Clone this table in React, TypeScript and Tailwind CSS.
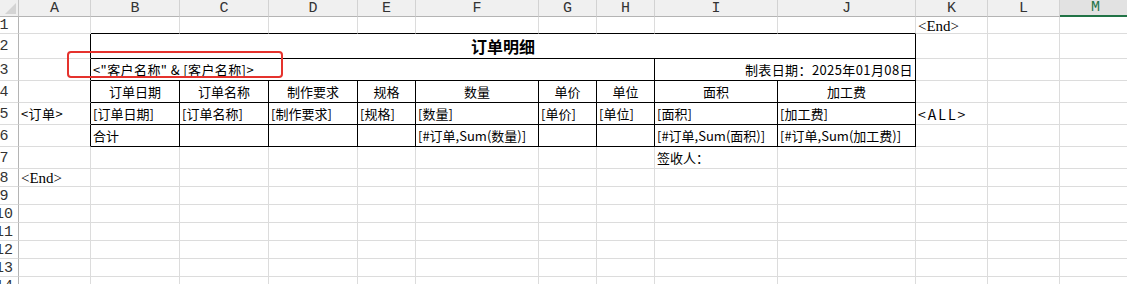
import React from "react";

type Cell = {
  text?: string;
  span?: number;
  align?: "left" | "center" | "right";
  bold?: boolean;
  serif?: boolean;
  big?: boolean;
  spaced?: "wide" | "slight";
};

const COLS = ["A", "B", "C", "D", "E", "F", "G", "H", "I", "J", "K", "L", "M"];
const ROW_COUNT = 14;

// Sheet contents keyed by row number, then column letter
const SHEET: Record<number, Record<string, Cell>> = {
  1: { K: { text: "<End>", serif: true } },
  2: { B: { text: "订单明细", span: 9, align: "center", bold: true, big: true } },
  3: {
    B: { text: '<"客户名称" & [客户名称]>', span: 7, spaced: "slight" },
    I: { text: "制表日期：2025年01月08日", span: 2, align: "right", spaced: "slight" },
  },
  4: {
    B: { text: "订单日期", align: "center" },
    C: { text: "订单名称", align: "center" },
    D: { text: "制作要求", align: "center" },
    E: { text: "规格", align: "center" },
    F: { text: "数量", align: "center" },
    G: { text: "单价", align: "center" },
    H: { text: "单位", align: "center" },
    I: { text: "面积", align: "center" },
    J: { text: "加工费", align: "center" },
  },
  5: {
    A: { text: "<订单>", spaced: "slight" },
    B: { text: "[订单日期]" },
    C: { text: "[订单名称]" },
    D: { text: "[制作要求]" },
    E: { text: "[规格]" },
    F: { text: "[数量]" },
    G: { text: "[单价]" },
    H: { text: "[单位]" },
    I: { text: "[面积]" },
    J: { text: "[加工费]" },
    K: { text: "<ALL>", spaced: "wide" },
  },
  6: {
    B: { text: "合计" },
    F: { text: "[#订单,Sum(数量)]" },
    I: { text: "[#订单,Sum(面积)]" },
    J: { text: "[#订单,Sum(加工费)]" },
  },
  7: { I: { text: "签收人：" } },
  8: { A: { text: "<End>", serif: true } },
};

function SheetCell({ row, col, cell }: { row: number; col: number; cell?: Cell }) {
  const span = cell?.span ?? 1;
  const lastCol = col + span - 1;
  const inTable = col >= 1 && lastCol <= 9;
  const rightBlack = row >= 2 && row <= 6 && (col === 0 || inTable);
  const bottomBlack = row >= 1 && row <= 6 && inTable;
  const align = cell?.align ?? "left";

  return (
    <div
      className={[
        "flex items-center overflow-visible whitespace-nowrap border-r border-b",
        rightBlack ? "border-r-black" : "border-r-[#dcdcdc]",
        bottomBlack ? "border-b-black" : "border-b-[#dcdcdc]",
        align === "center" ? "justify-center" : align === "right" ? "justify-end pr-[2px]" : "justify-start pl-[2px]",
        span === 9 ? "col-span-9" : span === 7 ? "col-span-7" : span === 2 ? "col-span-2" : "",
      ].join(" ")}
    >
      {cell?.text && (
        <span
          className={[
            cell.serif
              ? "font-['Liberation_Serif',serif] text-[15px] pt-[2px]"
              : "font-['Noto_Sans_CJK_SC',sans-serif] text-[13px]",
            cell.big ? "text-[16px] font-bold" : "",
            cell.spaced === "wide" ? "tracking-[2px] text-[14px]" : cell.spaced === "slight" ? "tracking-[0.4px]" : "",
            "leading-none text-black",
          ].join(" ")}
        >
          {cell.text}
        </span>
      )}
    </div>
  );
}

export default function App() {
  const cells: React.ReactNode[] = [];

  // corner + column headers
  cells.push(
    <div key="corner" className="relative border-r border-b border-r-[#c4c4c4] border-b-[#b4b4b4] bg-[#f0f0f0]">
      <svg className="absolute left-[5px] top-[3px]" width="11" height="11" viewBox="0 0 11 11">
        <path d="M11 0 L11 11 L0 11 Z" fill="#d4d4d4" />
      </svg>
    </div>
  );
  COLS.forEach((c) => {
    const active = c === "M";
    cells.push(
      <div
        key={`h-${c}`}
        className={[
          "flex items-center justify-center border-r border-r-[#d2d2d2] font-['Liberation_Mono',monospace] text-[15px] leading-none",
          active
            ? "bg-[#e2e2e2] text-[#217346] border-b-2 border-b-[#217346]"
            : "bg-[#f0f0f0] text-[#333] border-b border-b-[#b4b4b4]",
        ].join(" ")}
      >
        {c}
      </div>
    );
  });

  for (let r = 1; r <= ROW_COUNT; r++) {
    cells.push(
      <div key={`rh-${r}`} className="flex items-center overflow-hidden border-r border-b border-r-[#b4b4b4] border-b-[#dcdcdc] bg-white">
        <span className="-ml-[13px] w-[34px] shrink-0 pt-[1px] text-center font-['Liberation_Mono',monospace] text-[15px] leading-none text-[#333]">
          {r}
        </span>
      </div>
    );
    const rowData = SHEET[r] ?? {};
    let ci = 0;
    while (ci < COLS.length) {
      const cell = rowData[COLS[ci]];
      cells.push(<SheetCell key={`${r}-${ci}`} row={r} col={ci} cell={cell} />);
      ci += cell?.span ?? 1;
    }
  }

  return (
    <div className="relative h-[284px] w-[1127px] overflow-hidden bg-white">
      <div className="grid grid-cols-[19px_72px_89px_89px_89px_58px_123px_58px_58px_123px_138px_72px_72px_72px] grid-rows-[17px_17px_25px_22px_22px_22px_22px_22px_18px_18px_18px_18px_18px_18px_18px]">
        {cells}
      </div>
      {/* annotation box around the customer-name expression */}
      <div className="pointer-events-none absolute left-[67px] top-[51px] h-[27px] w-[216px] rounded-[4px] border-2 border-[#e5322d]" />
    </div>
  );
}
